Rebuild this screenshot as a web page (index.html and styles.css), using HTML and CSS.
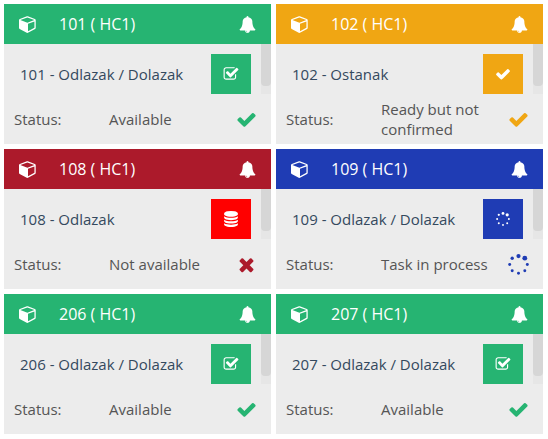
FILE: index.html
```html
<!DOCTYPE html>
<html lang="hr">
<head>
  <meta charset="UTF-8">
  <meta name="viewport" content="width=device-width, initial-scale=1.0">
  <title>Rooms</title>
  <link rel="stylesheet" href="styles.css">
</head>
<body>
  <svg class="defs" xmlns="http://www.w3.org/2000/svg">
    <symbol id="i-cube" viewBox="0 0 1792 1792"><path d="M896 1629l640-349v-636l-640 233v752zm-64-865l698-254-698-254-698 254zm832-252v768q0 35-18 65t-49 47l-704 384q-28 16-61 16t-61-16l-704-384q-31-17-49-47t-18-65v-768q0-40 23-73t61-47l704-256q22-8 44-8t44 8l704 256q38 14 61 47t23 73z"/></symbol>
    <symbol id="i-bell" viewBox="0 0 1792 1792"><path d="M912 1696q0-16-16-16-59 0-101.5-42.5t-42.5-101.5q0-16-16-16t-16 16q0 73 51.5 124.5t124.5 51.5q16 0 16-16zm816-288q0 52-38 90t-90 38h-448q0 106-75 181t-181 75-181-75-75-181h-448q-52 0-90-38t-38-90q50-42 91-88t85-119.5 74.5-158.5 50-206 19.5-260q0-152 117-282.5t307-158.5q-8-19-8-39 0-40 28-68t68-28 68 28 28 68q0 20-8 39 190 28 307 158.5t117 282.5q0 139 19.5 260t50 206 74.5 158.5 85 119.5 91 88z"/></symbol>
    <symbol id="i-check" viewBox="0 0 1792 1792"><path d="M1671 566q0 40-28 68l-724 724-136 136q-28 28-68 28t-68-28l-136-136-362-362q-28-28-28-68t28-68l136-136q28-28 68-28t68 28l294 295 656-657q28-28 68-28t68 28l136 136q28 28 28 68z"/></symbol>
    <symbol id="i-times" viewBox="0 0 1792 1792"><path d="M1490 1322q0 40-28 68l-136 136q-28 28-68 28t-68-28l-294-294-294 294q-28 28-68 28t-68-28l-136-136q-28-28-28-68t28-68l294-294-294-294q-28-28-28-68t28-68l136-136q28-28 68-28t68 28l294 294 294-294q28-28 68-28t68 28l136 136q28 28 28 68t-28 68l-294 294 294 294q28 28 28 68z"/></symbol>
    <symbol id="i-check-square" viewBox="0 0 1792 1792"><path d="M1472 930v318q0 119-84.5 203.5t-203.5 84.5h-832q-119 0-203.5-84.5t-84.5-203.5v-832q0-119 84.5-203.5t203.5-84.5h832q63 0 117 25 15 7 18 23 3 17-9 29l-49 49q-10 10-23 10-3 0-9-2-23-6-45-6h-832q-66 0-113 47t-47 113v832q0 66 47 113t113 47h832q66 0 113-47t47-113v-254q0-13 9-22l64-64q10-10 23-10 6 0 12 3 20 8 20 29zm231-489l-814 814q-24 24-57 24t-57-24l-430-430q-24-24-24-57t24-57l110-110q24-24 57-24t57 24l263 263 647-647q24-24 57-24t57 24l110 110q24 24 24 57t-24 57z"/></symbol>
    <symbol id="i-database" viewBox="0 0 1792 1792"><path d="M896 768q237 0 443-43t325-127v170q0 69-103 128t-280 93.5-385 34.5-385-34.5-280-93.5-103-128v-170q119 84 325 127t443 43zm0 768q237 0 443-43t325-127v170q0 69-103 128t-280 93.5-385 34.5-385-34.5-280-93.5-103-128v-170q119 84 325 127t443 43zm0-384q237 0 443-43t325-127v170q0 69-103 128t-280 93.5-385 34.5-385-34.5-280-93.5-103-128v-170q119 84 325 127t443 43zm0-1152q208 0 385 34.5t280 93.5 103 128v128q0 69-103 128t-280 93.5-385 34.5-385-34.5-280-93.5-103-128v-128q0-69 103-128t280-93.5 385-34.5z"/></symbol>
    <symbol id="i-spinner" viewBox="0 0 20 20">
      <circle cx="10" cy="2" r="2"/><circle cx="16" cy="4" r="2.3"/><circle cx="18.4" cy="10" r="1.4"/><circle cx="16" cy="16" r="1.4"/>
      <circle cx="10" cy="18.4" r="1.4"/><circle cx="4" cy="16" r="1.4"/><circle cx="1.6" cy="10" r="1.4"/><circle cx="4" cy="4" r="1.6"/>
    </symbol>
  </svg>

  <div class="grid">
    <div class="card green">
      <div class="head">
        <svg class="ico-cube"><use href="#i-cube"/></svg>
        <span class="name">101 ( HC1)</span>
        <svg class="ico-bell"><use href="#i-bell"/></svg>
      </div>
      <div class="task">
        <span class="task-name">101 - Odlazak / Dolazak</span>
        <div class="btn"><svg><use href="#i-check-square"/></svg></div>
        <div class="scroll"><div class="thumb"></div></div>
      </div>
      <div class="status">
        <span class="label">Status:</span>
        <span class="value">Available</span>
        <svg class="state"><use href="#i-check"/></svg>
      </div>
    </div>

    <div class="card orange">
      <div class="head">
        <svg class="ico-cube"><use href="#i-cube"/></svg>
        <span class="name">102 ( HC1)</span>
        <svg class="ico-bell"><use href="#i-bell"/></svg>
      </div>
      <div class="task">
        <span class="task-name">102 - Ostanak</span>
        <div class="btn"><svg><use href="#i-check"/></svg></div>
        <div class="scroll"><div class="thumb"></div></div>
      </div>
      <div class="status">
        <span class="label">Status:</span>
        <span class="value">Ready but not confirmed</span>
        <svg class="state"><use href="#i-check"/></svg>
      </div>
    </div>

    <div class="card red">
      <div class="head">
        <svg class="ico-cube"><use href="#i-cube"/></svg>
        <span class="name">108 ( HC1)</span>
        <svg class="ico-bell"><use href="#i-bell"/></svg>
      </div>
      <div class="task">
        <span class="task-name">108 - Odlazak</span>
        <div class="btn btn-red"><svg><use href="#i-database"/></svg></div>
        <div class="scroll"><div class="thumb"></div></div>
      </div>
      <div class="status">
        <span class="label">Status:</span>
        <span class="value">Not available</span>
        <svg class="state"><use href="#i-times"/></svg>
      </div>
    </div>

    <div class="card blue">
      <div class="head">
        <svg class="ico-cube"><use href="#i-cube"/></svg>
        <span class="name">109 ( HC1)</span>
        <svg class="ico-bell"><use href="#i-bell"/></svg>
      </div>
      <div class="task">
        <span class="task-name">109 - Odlazak / Dolazak</span>
        <div class="btn btn-spin"><svg><use href="#i-spinner"/></svg></div>
        <div class="scroll"><div class="thumb"></div></div>
      </div>
      <div class="status">
        <span class="label">Status:</span>
        <span class="value">Task in process</span>
        <svg class="state"><use href="#i-spinner"/></svg>
      </div>
    </div>

    <div class="card green">
      <div class="head">
        <svg class="ico-cube"><use href="#i-cube"/></svg>
        <span class="name">206 ( HC1)</span>
        <svg class="ico-bell"><use href="#i-bell"/></svg>
      </div>
      <div class="task">
        <span class="task-name">206 - Odlazak / Dolazak</span>
        <div class="btn"><svg><use href="#i-check-square"/></svg></div>
        <div class="scroll"><div class="thumb"></div></div>
      </div>
      <div class="status">
        <span class="label">Status:</span>
        <span class="value">Available</span>
        <svg class="state"><use href="#i-check"/></svg>
      </div>
    </div>

    <div class="card green">
      <div class="head">
        <svg class="ico-cube"><use href="#i-cube"/></svg>
        <span class="name">207 ( HC1)</span>
        <svg class="ico-bell"><use href="#i-bell"/></svg>
      </div>
      <div class="task">
        <span class="task-name">207 - Odlazak / Dolazak</span>
        <div class="btn"><svg><use href="#i-check-square"/></svg></div>
        <div class="scroll"><div class="thumb"></div></div>
      </div>
      <div class="status">
        <span class="label">Status:</span>
        <span class="value">Available</span>
        <svg class="state"><use href="#i-check"/></svg>
      </div>
    </div>
  </div>
</body>
</html>
```

FILE: styles.css
```css
body {
  margin: 0;
  background: white;
  font-family: "Open Sans", Arial, sans-serif;
  font-size: 15px;
  color: #555;
}

.defs {
  display: none;
}

.grid {
  display: grid;
  grid-template-columns: 267px 267px;
  column-gap: 5px;
  row-gap: 5px;
  padding: 4px;
}

.card {
  height: 140px;
  background: #ececec;
}

.green { --main: #26b472; }
.orange { --main: #f0a613; }
.red { --main: #ac1a2b; }
.blue { --main: #1f3cb4; }

.head {
  display: flex;
  align-items: center;
  height: 40px;
  background: var(--main);
  color: white;
  font-size: 16px;
}

.ico-cube {
  width: 18px;
  height: 18px;
  margin-left: 15px;
  fill: currentColor;
}

.name {
  flex: 1;
  margin-left: 22px;
}

.ico-bell {
  width: 17px;
  height: 17px;
  margin-right: 15px;
  fill: currentColor;
}

.task {
  display: flex;
  height: 50px;
}

.task-name {
  flex: 1;
  padding: 10px 0 0 16px;
  line-height: 40px;
  color: #34495e;
}

.btn {
  display: flex;
  align-items: center;
  justify-content: center;
  width: 40px;
  height: 40px;
  margin-top: 10px;
  background: var(--main);
}

.btn-red {
  background: #ff0000;
}

.btn svg {
  width: 16px;
  height: 16px;
  fill: white;
}

.btn-spin svg {
  width: 14px;
  height: 14px;
}

.scroll {
  width: 10px;
  margin-left: 10px;
  background: #e6e6e6;
}

.thumb {
  height: 42px;
  background: #d6d6d6;
  border-radius: 0 0 4px 4px;
}

.status {
  display: flex;
  align-items: center;
  height: 50px;
  padding-left: 10px;
  line-height: 20px;
}

.label {
  width: 95px;
}

.value {
  width: 127px;
}

.state {
  width: 21px;
  height: 21px;
  fill: var(--main);
}
```
